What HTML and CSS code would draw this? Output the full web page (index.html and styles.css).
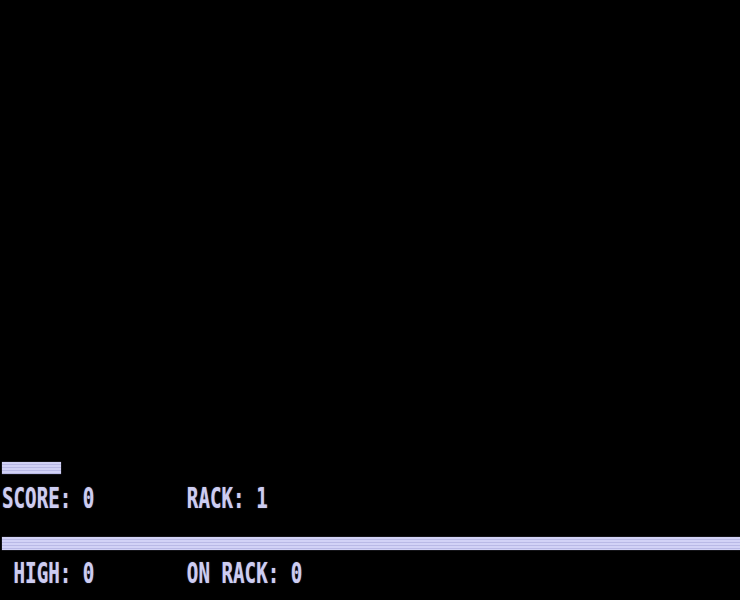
FILE: index.html
```html
<!DOCTYPE html>
<html lang="en">
<head>
    <meta charset="UTF-8">
    <meta name="viewport" content="width=device-width, initial-scale=1.0">
    <title>Breakout</title>
    <link rel="stylesheet" href="styles.css">
</head>
<body>
    <div class="screen">
        <div class="playfield">
            <div class="paddle"></div>
        </div>
        <div class="status"><span class="line">SCORE: 0        RACK: 1</span></div>
        <div class="divider"></div>
        <div class="status status-low"><span class="line"> HIGH: 0        ON RACK: 0</span></div>
    </div>
</body>
</html>
```

FILE: styles.css
```css
* {
    margin: 0;
    padding: 0;
    box-sizing: border-box;
}
body {
    background-color: #000;
    width: 740px;
    height: 600px;
    overflow: hidden;
}
.screen {
    display: flex;
    flex-direction: column;
    height: 600px;
    padding-top: 462px;
}
/* scanline look for the solid blocks */
.paddle,
.divider {
    background: repeating-linear-gradient(
        to bottom,
        #d2d2f6 0px,
        #d2d2f6 2px,
        #b9b9e6 2px,
        #b9b9e6 3px
    );
    box-shadow: 0 0 1px rgba(200, 200, 240, 0.6);
}
.paddle {
    width: 59px;
    height: 12px;
    margin-left: 2px;
}
.divider {
    height: 13px;
    margin: 33px 0 0 2px;
}
.status {
    height: 20px;
    margin-top: 10px;
    padding-left: 2px;
}
.status-low {
    margin-top: 9px;
}
.line {
    display: inline-block;
    white-space: pre;
    font-family: "DejaVu Sans Mono", monospace;
    font-weight: bold;
    font-size: 19.2px;
    line-height: 1;
    color: #cdcdf2;
    transform: scaleY(1.5);
    transform-origin: left top;
    text-shadow: 0 0 1px rgba(205, 205, 242, 0.5);
}
```
